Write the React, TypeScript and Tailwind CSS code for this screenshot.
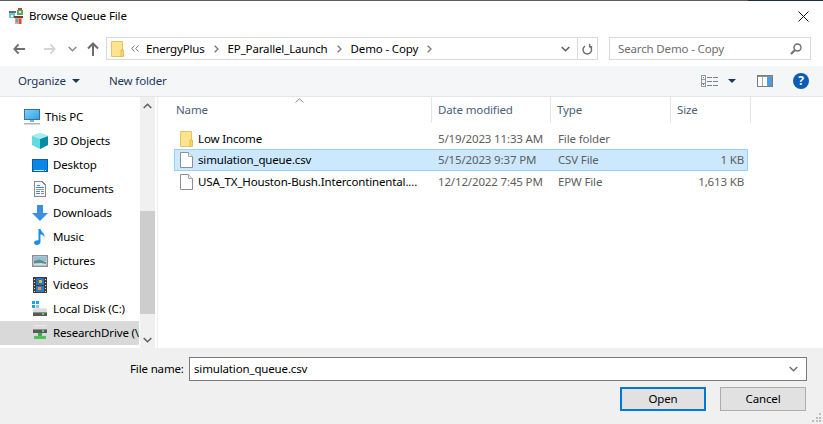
import React from "react";

const FolderIcon = ({ className = "" }: { className?: string }) => (
  <svg className={className} width="13" height="16" viewBox="0 0 13 16">
    <path d="M0.5 0.5H11.5V15.5H0.5Z" fill="#ffe48f" stroke="#e3c463" />
    <path d="M10 9H12.5V15.5H10Z" fill="#f7d674" stroke="#dcb64d" strokeWidth="0.8" />
  </svg>
);

const FileIcon = () => (
  <svg width="13" height="16" viewBox="0 0 13 16">
    <path d="M0.5 0.5H8.5L12.5 4.5V15.5H0.5Z" fill="#fff" stroke="#8f8f8f" />
    <path d="M8.5 0.5V4.5H12.5" fill="#f0f0f0" stroke="#a8a8a8" />
  </svg>
);

const AppIcon = () => (
  <svg width="16" height="18" viewBox="0 0 16 18" shapeRendering="crispEdges">
    <rect x="10" y="1" width="4" height="2" fill="#a0523d" />
    <rect x="9" y="3" width="6" height="5" fill="#5aa860" />
    <rect x="11" y="4" width="2" height="2" fill="#dff0d8" />
    <rect x="1" y="4" width="7" height="2" fill="#6b6b6b" />
    <rect x="1" y="6" width="6" height="5" fill="#62c6d4" />
    <rect x="3" y="8" width="2" height="2" fill="#ffffff" />
    <rect x="6" y="9" width="9" height="2" fill="#7a3a28" />
    <rect x="7" y="11" width="7" height="6" fill="#ef9a8c" />
    <rect x="8" y="12" width="2" height="3" fill="#4fa9c9" />
    <rect x="11" y="12" width="2" height="5" fill="#b75c4d" />
  </svg>
);

const PcIcon = () => (
  <svg width="16" height="16" viewBox="0 0 16 16">
    <defs>
      <linearGradient id="pcScreen" x1="0" y1="0" x2="1" y2="1">
        <stop offset="0" stopColor="#7fd4fb" />
        <stop offset="1" stopColor="#2f9fe8" />
      </linearGradient>
    </defs>
    <rect x="0.5" y="0.5" width="15" height="10" fill="url(#pcScreen)" stroke="#39739d" />
    <rect x="6" y="11" width="4" height="2" fill="#9aa9b3" />
    <rect x="0" y="14" width="16" height="1.5" fill="#a9b5bd" />
  </svg>
);

const CubeIcon = () => (
  <svg width="16" height="16" viewBox="0 0 16 16">
    <path d="M8 0L16 3V12L8 16L0 12V3Z" fill="#5fdbe2" />
    <path d="M8 6L16 3V12L8 16Z" fill="#0b8aa3" />
    <path d="M8 0L16 3L8 6L0 3Z" fill="#a5eef0" />
  </svg>
);

const DesktopIcon = () => (
  <svg width="16" height="13" viewBox="0 0 16 13">
    <rect x="0.5" y="0.5" width="15" height="12" fill="#0a87e8" stroke="#0a5ea8" />
    <rect x="2" y="11" width="10" height="1" fill="#cfe8fb" />
    <rect x="13" y="11" width="1" height="1" fill="#ffffff" />
  </svg>
);

const DocIcon = () => (
  <svg width="12" height="16" viewBox="0 0 12 16" shapeRendering="crispEdges">
    <path d="M0.5 0.5H8L11.5 4V15.5H0.5Z" fill="#f6f6f6" stroke="#8a8a8a" />
    <path d="M3 4.5H6M2 6.5H9.5" stroke="#3a8ee0" strokeWidth="1" />
    <path d="M2 8.5H9.5" stroke="#9a9a9a" strokeWidth="1" />
    <path d="M2 10.5H6M2 12.5H6" stroke="#3a8ee0" strokeWidth="1" />
    <path d="M7 10.5H9.5M7 12.5H9.5" stroke="#8a8a8a" strokeWidth="1" />
  </svg>
);

const DownIcon = () => (
  <svg width="16" height="16" viewBox="0 0 16 16">
    <path d="M5 0H11V8H16L8 16L0 8H5Z" fill="#3b8fdc" />
  </svg>
);

const MusicIcon = () => (
  <svg width="12" height="16" viewBox="0 0 12 16">
    <path d="M4.5 0H6.5C7 3 11 4 10.5 8.5C9.8 6.5 8 5.5 6.5 5.2V13C6.5 15 4.5 16 2.5 16C1 16 0 15 0 13.8C0 12.2 2 11 4.5 11.3Z" fill="#1b8fe8" />
  </svg>
);

const PictureIcon = () => (
  <svg width="16" height="12" viewBox="0 0 16 12">
    <rect x="0.75" y="0.75" width="14.5" height="10.5" fill="#eef3f6" stroke="#8f8f8f" strokeWidth="1.5" />
    <rect x="2" y="2" width="12" height="4" fill="#8fc0de" />
    <path d="M2 6L7 4.5L14 7V10H2Z" fill="#5f8f88" />
    <path d="M2 8.5L9 8L14 9V10H2Z" fill="#cfe0e6" />
  </svg>
);

const VideoIcon = () => (
  <svg width="14" height="16" viewBox="0 0 14 16" shapeRendering="crispEdges">
    <rect width="14" height="16" fill="#3c3c3c" />
    <rect x="3" y="1" width="8" height="6.5" fill="#2a72c4" />
    <rect x="3" y="8.5" width="8" height="6.5" fill="#2f7dca" />
    <rect x="6" y="3" width="3" height="3" fill="#e8b72e" />
    <rect x="5" y="10" width="3" height="3" fill="#e8962e" />
    <path d="M1 2H2V3H1ZM1 5H2V6H1ZM1 8H2V9H1ZM1 11H2V12H1ZM1 14H2V15H1ZM12 2H13V3H12ZM12 5H13V6H12ZM12 8H13V9H12ZM12 11H13V12H12ZM12 14H13V15H12Z" fill="#ddd" />
  </svg>
);

const DiskIcon = () => (
  <svg width="16" height="16" viewBox="0 0 16 16" shapeRendering="crispEdges">
    <rect x="0" y="0" width="3" height="3" fill="#1aa3e8" />
    <rect x="4" y="0" width="3" height="3" fill="#1aa3e8" />
    <rect x="0" y="4" width="3" height="3" fill="#1aa3e8" />
    <rect x="4" y="4" width="3" height="3" fill="#7cc8ef" />
    <rect x="2" y="7" width="12" height="1" fill="#e8e8e8" />
    <rect x="1" y="8" width="14" height="3" fill="#dcdcdc" />
    <rect x="1" y="11" width="14" height="1" fill="#8f8f8f" />
    <rect x="1" y="12" width="14" height="3" fill="#5a5a5a" />
    <rect x="10" y="12" width="2" height="2" fill="#58d858" />
  </svg>
);

const NetDriveIcon = () => (
  <svg width="16" height="16" viewBox="0 0 16 16" shapeRendering="crispEdges">
    <rect x="2" y="0" width="12" height="1" fill="#e8e8e8" />
    <rect x="1" y="1" width="14" height="3" fill="#dcdcdc" />
    <rect x="1" y="4" width="14" height="1" fill="#8f8f8f" />
    <rect x="1" y="5" width="14" height="3" fill="#5a5a5a" />
    <rect x="10" y="5" width="2" height="2" fill="#58d858" />
    <rect x="6" y="8" width="4" height="3" fill="#3fae49" />
    <rect x="2" y="11" width="12" height="3" fill="#4dc257" />
  </svg>
);

const Chevron = ({ up = false, color = "#606060" }: { up?: boolean; color?: string }) => (
  <svg width="9" height="6" viewBox="0 0 9 6">
    <path d={up ? "M0.7 5L4.5 1.3L8.3 5" : "M0.7 1L4.5 4.7L8.3 1"} fill="none" stroke={color} strokeWidth="1.6" />
  </svg>
);

const Sep = () => (
  <svg className="shrink-0" width="5" height="8" viewBox="0 0 5 8">
    <path d="M0.7 0.7L4 4L0.7 7.3" fill="none" stroke="#777" strokeWidth="1.3" />
  </svg>
);

const SideItem = ({ icon, label, indent = true, selected = false }: { icon: React.ReactNode; label: string; indent?: boolean; selected?: boolean }) => (
  <div className={`flex h-6 shrink-0 items-center overflow-hidden whitespace-nowrap ${indent ? "pl-8" : "pl-6"} ${selected ? "bg-[#d9d9d9]" : ""}`}>
    <span className="flex w-4 shrink-0 justify-center">{icon}</span>
    <span className="ml-[5px]">{label}</span>
  </div>
);

const HeaderCell = ({ label, className }: { label: string; className: string }) => (
  <div className={`flex h-full items-center border-r border-[#e5e5e5] pl-[6px] text-[#4c607a] ${className}`}>{label}</div>
);

const Row = ({ icon, name, date, type, size, selected = false, height }: { icon: React.ReactNode; name: string; date: string; type: string; size: string; selected?: boolean; height: string }) => (
  <div className={`ml-4 flex w-[574px] items-center whitespace-nowrap ${height} ${selected ? "border border-[#99d1ff] bg-[#cce8ff]" : ""}`}>
    <span className={`flex shrink-0 justify-center ${selected ? "w-[23px] pr-px" : "w-[24px]"}`}>{icon}</span>
    <span className="w-[240px] shrink-0 text-black">{name}</span>
    <span className="w-[120px] shrink-0 text-[#5e5e5e]">{date}</span>
    <span className="w-[120px] shrink-0 text-[#5e5e5e]">{type}</span>
    <span className="w-[66px] shrink-0 text-right text-[#5e5e5e]">{size}</span>
  </div>
);

export default function App() {
  return (
    <div className="flex h-[424px] w-[823px] flex-col overflow-hidden bg-white text-[11.5px] tracking-[-0.15px] text-black" style={{ fontFamily: '"Noto Sans", "Open Sans", sans-serif' }}>
      <div className="flex h-px shrink-0">
        <div className="w-[748px] bg-[#5c5c5c]" />
        <div className="flex-1 bg-[#16324f]" />
      </div>

      {/* Title bar */}
      <div className="flex h-[30px] shrink-0 items-center pl-2 pr-[14px]">
        <AppIcon />
        <span className="ml-[5px]">Browse Queue File</span>
        <svg className="ml-auto" width="11" height="11" viewBox="0 0 11 11">
          <path d="M0.5 0.5L10.5 10.5M10.5 0.5L0.5 10.5" stroke="#111" strokeWidth="1" />
        </svg>
      </div>

      {/* Navigation */}
      <div className="flex h-[35px] shrink-0 items-center pl-[13px] pr-3">
        <svg width="13" height="12" viewBox="0 0 14 12">
          <path d="M6 1L1.5 6L6 11M1.5 6H13" fill="none" stroke="#6d6d6d" strokeWidth="2" />
        </svg>
        <svg className="ml-[17px]" width="13" height="12" viewBox="0 0 14 12">
          <path d="M8 1L12.5 6L8 11M12.5 6H1" fill="none" stroke="#d4d4d4" strokeWidth="2" />
        </svg>
        <span className="ml-[12px]"><Chevron color="#8a8a8a" /></span>
        <svg className="ml-[10px]" width="12" height="14" viewBox="0 0 12 14">
          <path d="M1 6.5L6 1.5L11 6.5M6 1.5V14" fill="none" stroke="#6d6d6d" strokeWidth="2" />
        </svg>
        <div className="ml-[7px] flex h-[23px] w-[492px] shrink-0 items-center border border-[#d9d9d9] pl-[4px]">
          <FolderIcon />
          <svg className="ml-[7px] shrink-0" width="8" height="7" viewBox="0 0 8 7">
            <path d="M3.5 0.5L0.7 3.5L3.5 6.5M7.5 0.5L4.7 3.5L7.5 6.5" fill="none" stroke="#777" strokeWidth="1" />
          </svg>
          <span className="ml-[7px]">EnergyPlus</span>
          <span className="ml-[9px]"><Sep /></span>
          <span className="ml-[9px]">EP_Parallel_Launch</span>
          <span className="ml-[9px]"><Sep /></span>
          <span className="ml-[9px]">Demo - Copy</span>
          <span className="ml-[9px]"><Sep /></span>
          <div className="ml-auto flex h-full items-center">
            <span className="mr-[7px]"><Chevron /></span>
            <div className="flex h-full w-[20px] items-center justify-center border-l border-[#d9d9d9]">
              <svg width="11" height="12" viewBox="0 0 11 12">
                <path d="M3 2.6A4.3 4.3 0 1 0 7.6 2.6M7.6 0.5V3.2H10.2" transform="translate(0 0.5)" fill="none" stroke="#6d6d6d" strokeWidth="1.4" />
              </svg>
            </div>
          </div>
        </div>
        <div className="ml-auto flex h-[23px] w-[202px] items-center justify-between border border-[#d9d9d9] pl-2 pr-2 text-[#6d6d6d]">
          <span>Search Demo - Copy</span>
          <svg width="12" height="12" viewBox="0 0 12 12">
            <circle cx="7.5" cy="4.5" r="3.5" fill="none" stroke="#6d6d6d" strokeWidth="1.4" />
            <path d="M5 7L1 11" stroke="#6d6d6d" strokeWidth="2" />
          </svg>
        </div>
      </div>

      {/* Toolbar */}
      <div className="flex h-[31px] shrink-0 items-center border-b border-[#e5e5e5] bg-[#f5f6f7] pl-[18px] pr-[14px] text-[#1e395b]">
        <span>Organize</span>
        <svg className="ml-[6px]" width="8" height="4" viewBox="0 0 8 4"><path d="M0 0H8L4 4Z" fill="#1e395b" /></svg>
        <span className="ml-[29px]">New folder</span>
        <svg className="ml-auto" width="17" height="12" viewBox="0 0 17 12" shapeRendering="crispEdges">
          <path d="M0.5 0.5H4.5V4H0.5ZM0.5 4H4.5V8H0.5ZM0.5 8H4.5V11.5H0.5Z" fill="none" stroke="#8f99a5" />
          <path d="M6 2.5H17M6 6.5H17M6 10.5H17" stroke="#7d828a" strokeWidth="1" strokeDasharray="5 1" />
          <rect x="2" y="2" width="1" height="1" fill="#3c7fc4" />
          <rect x="2" y="9" width="1" height="1" fill="#d23a3a" />
        </svg>
        <svg className="ml-[10px]" width="8" height="4" viewBox="0 0 8 4"><path d="M0 0H8L4 4Z" fill="#1e395b" /></svg>
        <svg className="ml-[21px]" width="16" height="12" viewBox="0 0 16 12" shapeRendering="crispEdges">
          <rect x="0.5" y="0.5" width="15" height="11" fill="#fff" stroke="#7d7d7d" />
          <rect x="0.5" y="0.5" width="15" height="1.5" fill="#8f8f8f" />
          <rect x="10" y="2" width="5" height="9" fill="#4a9be0" />
          <path d="M5.5 2V11" stroke="#a8a8a8" />
        </svg>
        <div className="ml-[20px] flex h-4 w-4 items-center justify-center rounded-full bg-[#0a5db5] text-[12px] font-bold leading-none text-white">?</div>
      </div>

      {/* Main */}
      <div className="flex min-h-0 flex-1">
        {/* Sidebar */}
        <div className="flex w-[139px] shrink-0 flex-col overflow-hidden pt-2">
          <SideItem indent={false} icon={<PcIcon />} label="This PC" />
          <SideItem icon={<CubeIcon />} label="3D Objects" />
          <SideItem icon={<DesktopIcon />} label="Desktop" />
          <SideItem icon={<DocIcon />} label="Documents" />
          <SideItem icon={<DownIcon />} label="Downloads" />
          <SideItem icon={<MusicIcon />} label="Music" />
          <SideItem icon={<PictureIcon />} label="Pictures" />
          <SideItem icon={<VideoIcon />} label="Videos" />
          <SideItem icon={<DiskIcon />} label="Local Disk (C:)" />
          <SideItem selected icon={<NetDriveIcon />} label="ResearchDrive (\\" />
        </div>

        {/* Scrollbar */}
        <div className="ml-px flex w-[15px] shrink-0 flex-col bg-[#f0f0f0]">
          <div className="flex h-[17px] shrink-0 items-center justify-center"><Chevron up /></div>
          <div className="h-[97px] shrink-0" />
          <div className="h-[103px] shrink-0 bg-[#cdcdcd]" />
          <div className="flex-1" />
          <div className="flex h-[17px] shrink-0 items-center justify-center"><Chevron /></div>
        </div>

        {/* File list */}
        <div className="relative ml-[2px] min-w-0 flex-1 border-l border-[#f0f0f0]">
          <svg className="absolute left-[137px] top-[1px]" width="9" height="5" viewBox="0 0 9 5">
            <path d="M0.5 4.5L4.5 0.8L8.5 4.5" fill="none" stroke="#8a8a8a" />
          </svg>
          <div className="flex h-[26px]">
            <HeaderCell label="Name" className="w-[274px] pl-[18px]" />
            <HeaderCell label="Date modified" className="w-[119px]" />
            <HeaderCell label="Type" className="w-[120px]" />
            <HeaderCell label="Size" className="w-[80px]" />
          </div>
          <div className="pt-[5px]">
            <Row height="h-[21px]" icon={<FolderIcon />} name="Low Income" date="5/19/2023 11:33 AM" type="File folder" size="" />
            <Row height="h-[22px]" selected icon={<FileIcon />} name="simulation_queue.csv" date="5/15/2023 9:37 PM" type="CSV File" size="1 KB" />
            <Row height="h-[21px]" icon={<FileIcon />} name="USA_TX_Houston-Bush.Intercontinental...." date="12/12/2022 7:45 PM" type="EPW File" size="1,613 KB" />
          </div>
        </div>
      </div>

      {/* Footer */}
      <div className="relative flex h-[76px] shrink-0 flex-col bg-[#f0f0f0] pl-[130px] pr-4 pt-[9px]">
        <div className="flex h-6 items-center">
          <span className="w-[59px] shrink-0">File name:</span>
          <div className="flex h-6 w-[618px] items-center justify-between border border-[#7a7a7a] bg-white pl-1 pr-2">
            <span>simulation_queue.csv</span>
            <Chevron color="#707070" />
          </div>
        </div>
        <div className="mt-[6px] flex justify-end gap-[14px] pr-px">
          <button className="h-6 w-[86px] border-2 border-[#0078d7] bg-[#e1e1e1]">Open</button>
          <button className="h-6 w-[86px] border border-[#adadad] bg-[#e1e1e1]">Cancel</button>
        </div>
        <svg className="absolute bottom-[1px] right-[1px]" width="10" height="10" viewBox="0 0 10 10" shapeRendering="crispEdges">
          <path d="M7 0H9V2H7ZM3.5 3.5H5.5V5.5H3.5ZM7 3.5H9V5.5H7ZM0 7H2V9H0ZM3.5 7H5.5V9H3.5ZM7 7H9V9H7Z" fill="#bdbdbd" />
        </svg>
      </div>
    </div>
  );
}
